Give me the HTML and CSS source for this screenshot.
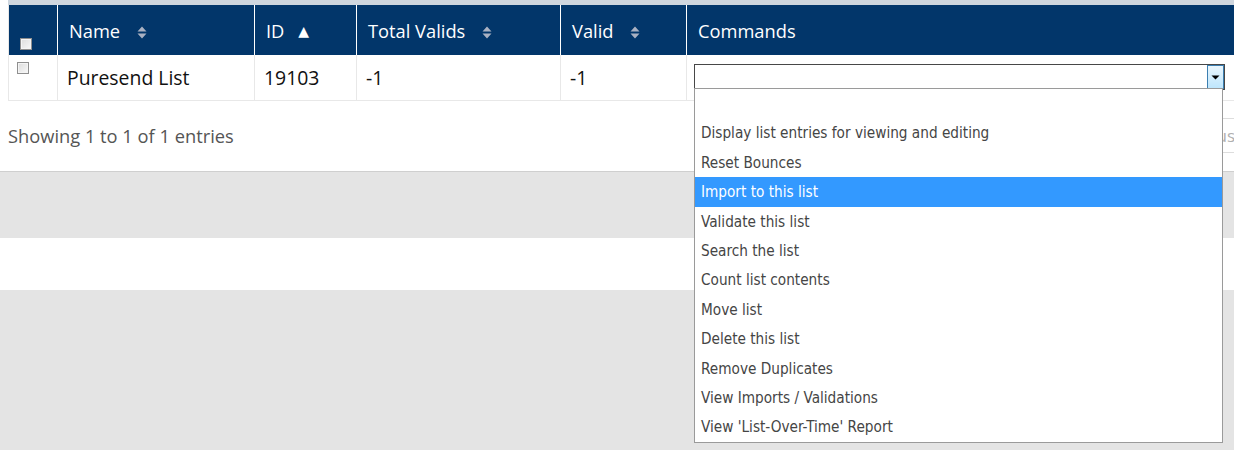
FILE: index.html
```html
<!DOCTYPE html>
<html>
<head>
<meta charset="utf-8">
<link rel="stylesheet" href="styles.css">
</head>
<body>
<div class="page">
  <div class="panel">
    <table class="grid">
      <thead>
        <tr>
          <th class="c-check"><span class="cb cb-head"></span></th>
          <th class="c-name">Name <svg class="sort" width="10" height="13" viewBox="0 0 10 13"><path d="M5 0.5 L9.5 5.5 L0.5 5.5 Z M5 12.5 L9.5 7.5 L0.5 7.5 Z" fill="#a9b1c2"/></svg></th>
          <th class="c-id">ID <span class="asc">▲</span></th>
          <th class="c-total">Total Valids <svg class="sort" width="10" height="13" viewBox="0 0 10 13"><path d="M5 0.5 L9.5 5.5 L0.5 5.5 Z M5 12.5 L9.5 7.5 L0.5 7.5 Z" fill="#a9b1c2"/></svg></th>
          <th class="c-valid">Valid <svg class="sort" width="10" height="13" viewBox="0 0 10 13"><path d="M5 0.5 L9.5 5.5 L0.5 5.5 Z M5 12.5 L9.5 7.5 L0.5 7.5 Z" fill="#a9b1c2"/></svg></th>
          <th class="c-cmd">Commands</th>
        </tr>
      </thead>
      <tbody>
        <tr>
          <td class="c-check"><span class="cb cb-row"></span></td>
          <td>Puresend List</td>
          <td>19103</td>
          <td>-1</td>
          <td>-1</td>
          <td class="cmd-cell">
            <div class="select">
              <span class="select-btn"><svg width="9" height="5" viewBox="0 0 9 5"><path d="M0.5 0.5 L8.5 0.5 L4.5 4.5 Z" fill="#000"/></svg></span>
            </div>
            <ul class="options">
              <li class="empty">&nbsp;</li>
              <li>Display list entries for viewing and editing</li>
              <li>Reset Bounces</li>
              <li class="hl">Import to this list</li>
              <li>Validate this list</li>
              <li>Search the list</li>
              <li>Count list contents</li>
              <li>Move list</li>
              <li>Delete this list</li>
              <li>Remove Duplicates</li>
              <li>View Imports / Validations</li>
              <li>View 'List-Over-Time' Report</li>
            </ul>
          </td>
        </tr>
      </tbody>
    </table>
    <div class="info">
      <div class="info-text">Showing 1 to 1 of 1 entries</div>
      <div class="pager"><span class="pbtn">Previous</span></div>
    </div>
  </div>
</div>
<div class="band band-gray"></div>
<div class="band band-white"></div>
<div class="band band-rest"></div>
</body>
</html>
```

FILE: styles.css
```css
html, body {
  margin: 0;
  padding: 0;
  overflow: hidden;
  background: #ffffff;
}
body {
  font-family: "Open Sans", "Liberation Sans", sans-serif;
  width: 1234px;
  height: 450px;
}
.page {
  padding-left: 8px;
  width: 1250px;
}
.panel {
  border-top: 5px solid #cfd6de;
}
.grid {
  border-collapse: collapse;
  width: 1242px;
  table-layout: fixed;
  border-left: 1px solid #e8e8e8;
}
.grid th {
  background: #02366a;
  color: #ffffff;
  font-weight: normal;
  font-size: 18.3px;
  text-align: left;
  height: 50px;
  padding: 0 0 0 11px;
  border-left: 1px solid #ffffff;
  box-sizing: border-box;
  white-space: nowrap;
}
.grid th.c-check {
  border-left: none;
  padding: 0;
}
.grid td {
  font-size: 19.4px;
  color: #111;
  height: 45px;
  padding: 1px 0 0 9px;
  border-left: 1px solid #e8e8e8;
  border-bottom: 1px solid #e8e8e8;
  box-sizing: border-box;
  vertical-align: middle;
}
.grid td.c-check {
  border-left: none;
  vertical-align: top;
  padding: 0;
}
.c-check { width: 49px; }
.c-name { width: 197px; }
.c-id { width: 102px; }
.c-total { width: 204px; }
.c-valid { width: 126px; }
.c-cmd { width: 564px; }
.sort {
  margin-left: 12px;
  vertical-align: -1px;
}
.asc {
  font-size: 14px;
  margin-left: 9px;
  font-family: "DejaVu Sans", sans-serif;
  vertical-align: 2px;
}
.cb {
  display: block;
  width: 10px;
  height: 10px;
  border: 1px solid #8f8f8f;
  background: linear-gradient(135deg, #dcdcdc, #f8f8f8);
  box-shadow: inset 0 0 0 1px #f4f4f4;
}
.cb-head {
  margin: 27px 0 0 11px;
}
.cb-row {
  margin: 7px 0 0 8px;
}
.cmd-cell {
  position: relative;
  padding-left: 7px !important;
  padding-top: 0 !important;
}
.select {
  width: 529px;
  height: 24px;
  border: 1px solid #474747;
  background: #fff;
  display: flex;
  justify-content: flex-end;
}
.select-btn {
  width: 15px;
  height: 22px;
  border: 1px solid #3c7fb1;
  background: linear-gradient(#eaf6fd, #bee6fd);
  display: flex;
  align-items: center;
  justify-content: center;
}
.options {
  position: absolute;
  left: 7px;
  top: 33px;
  margin: 0;
  padding: 0;
  list-style: none;
  width: 527px;
  border: 1px solid #9a9a9a;
  background: #fff;
  z-index: 5;
}
.options li {
  height: 29.4px;
  line-height: 31.5px;
  padding-left: 6px;
  font-family: "DejaVu Sans Condensed", "DejaVu Sans", sans-serif;
  font-size: 15.2px;
  color: #454545;
  white-space: nowrap;
  overflow: hidden;
}
.options li.hl {
  background: #3399ff;
  color: #ffffff;
}
.info {
  height: 70px;
  display: flex;
  justify-content: space-between;
  align-items: flex-start;
}
.info-text {
  font-size: 18.3px;
  color: #555;
  padding-top: 22px;
}
.pager {
  padding-top: 17px;
  margin-right: 8px;
}
.pbtn {
  display: block;
  border: 1px solid #dddddd;
  padding: 5px 14px;
  font-size: 17px;
  color: #b0b0b0;
}
.band {
  width: 100%;
}
.band-gray {
  height: 66px;
  background: #e4e4e4;
  border-top: 1px solid #cfcfcf;
}
.band-white {
  height: 52px;
  background: #ffffff;
}
.band-rest {
  height: 200px;
  background: #e4e4e4;
}
```
